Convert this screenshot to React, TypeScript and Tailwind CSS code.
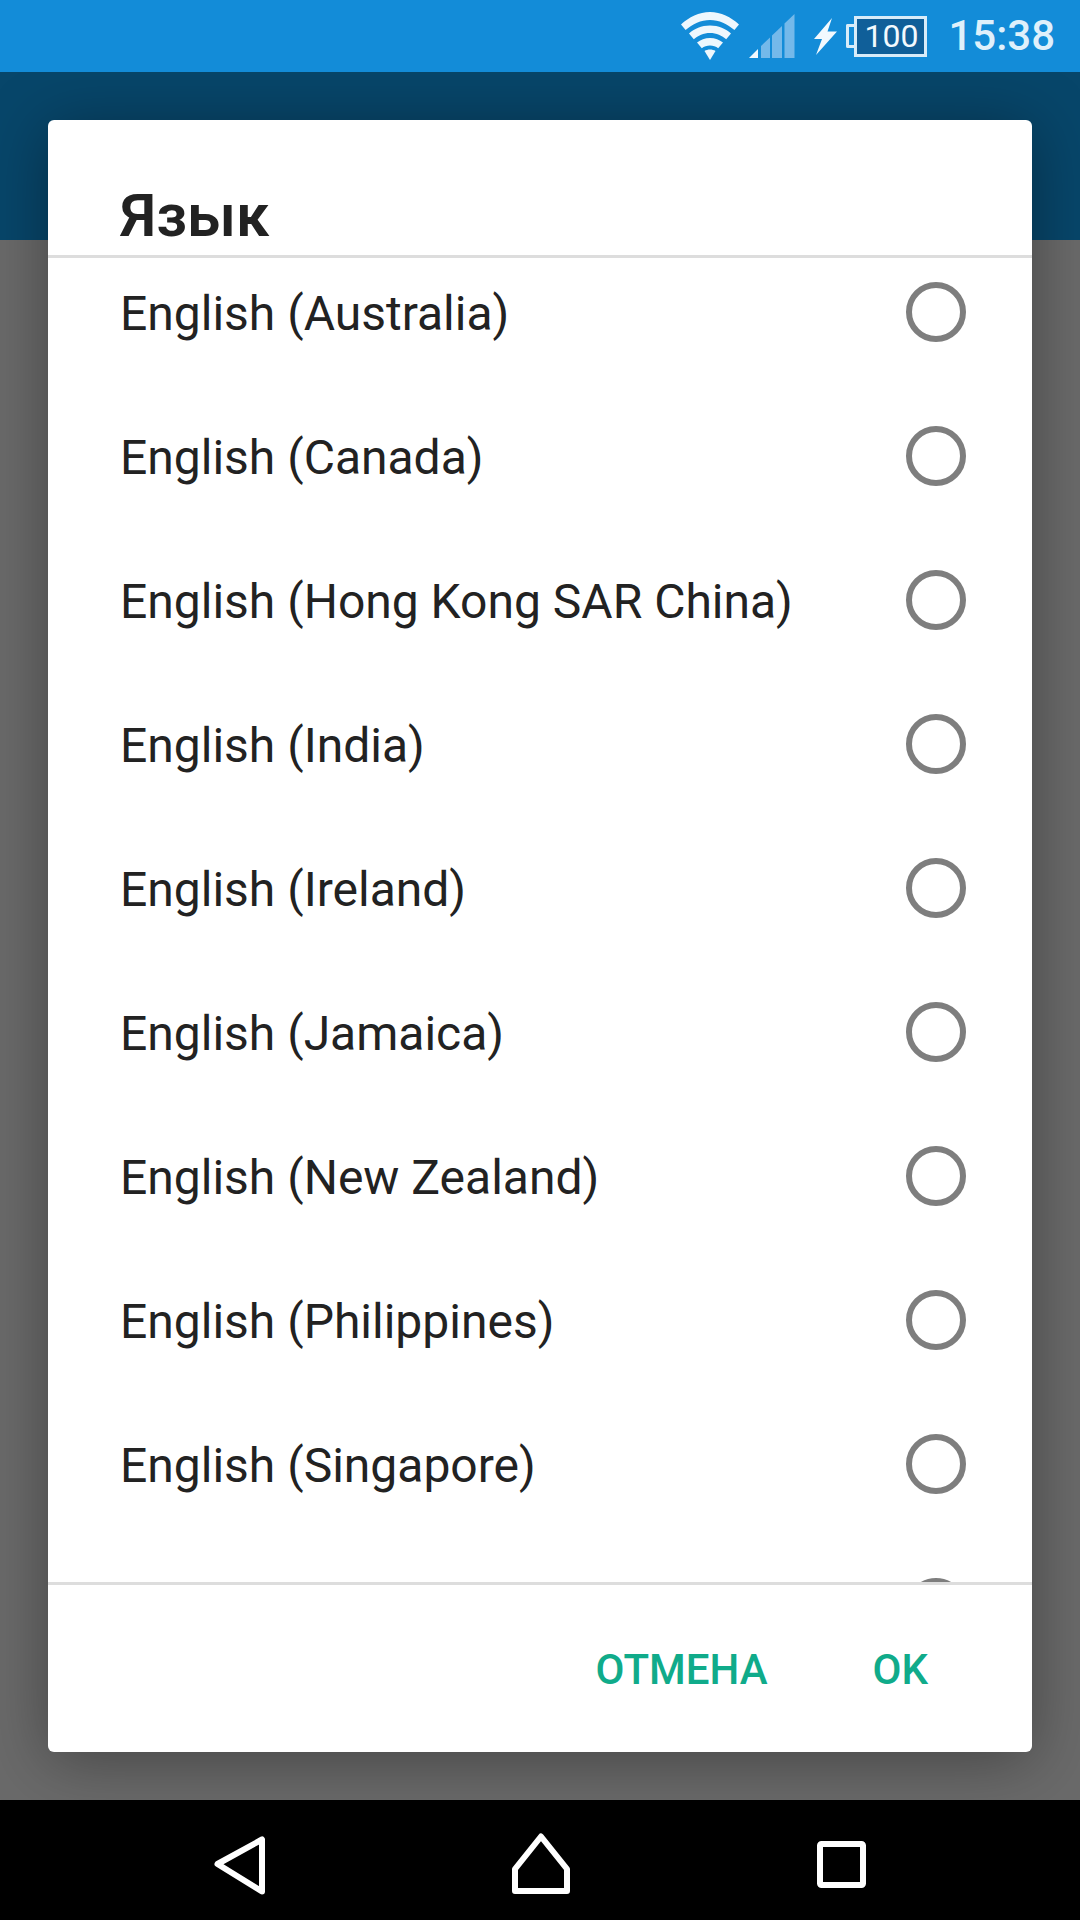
const rows = ["English (Australia)","English (Canada)","English (Hong Kong SAR China)","English (India)","English (Ireland)","English (Jamaica)","English (New Zealand)","English (Philippines)","English (Singapore)",""];

function Wifi() {
  return (
    <svg width="58" height="49" viewBox="0 0 58 49" className="mr-[10px]">
      <path d="M0 12.5C8 5 18 0 29 0s21 5 29 12.5l-4.6 5.6C46.5 12 38 8 29 8S11.500 12 4.600 18.100Z" fill="#eef7fd" />
      <path d="M8 21.500C13 17 20.500 13.500 29 13.500S45 17 50 21.500l-4.800 5.800C41 23.500 35.500 21 29 21s-12 2.500-16.200 6.300Z" fill="#eef7fd" />
      <path d="M16 30.500C19.500 27.800 24 26 29 26s9.500 1.800 13 4.500l-4.800 5.700C35 34.500 32 33.500 29 33.500s-6 1-8.200 2.700Z" fill="#eef7fd" />
      <path d="M23.500 39C25 38 27 37.500 29 37.500s4 .5 5.500 1.500L29 48Z" fill="#eef7fd" />
    </svg>
  );
}

function Signal() {
  return (
    <svg width="46" height="45" viewBox="0 0 46 45" className="mr-[19px]">
      <path d="M0 44 9 35V44Z" fill="#f2f9fe" />
      <path d="M12 32 21 23.500V44H12Z" fill="#74b9ea" />
      <path d="M23 21.500 33 12V44H23Z" fill="#74b9ea" />
      <path d="M35.500 9.500 45.500 0V44H35.500Z" fill="#74b9ea" />
    </svg>
  );
}

function Bolt() {
  return (
    <svg width="23" height="37" viewBox="0 0 23 37" className="mr-[9px]">
      <path d="M18 0 0 21H8L2 37 23 13.500H13.500Z" fill="#f2f9fe" />
    </svg>
  );
}

function Battery() {
  return (
    <div className="flex items-center mr-[21px]">
      <div className="w-[8px] h-[24px] border-[3px] border-r-0 border-[#d8ecf9] rounded-l-[2px]" />
      <div className="w-[73px] h-[41px] border-[3px] border-[#d8ecf9] bg-[#105f99] flex items-center justify-center text-[32px] leading-none text-[#f2f9fe] pl-[1px]">100</div>
    </div>
  );
}

function Row({ label }: { label: string }) {
  return (
    <div className="h-[144px] shrink-0 flex items-center justify-between pl-[72px] pr-[66px]">
      <span className="text-[48px] leading-none text-[#222222] pt-[4px]">{label}</span>
      <div className="w-[60px] h-[60px] rounded-full border-[6px] border-[#7e7e7e]" />
    </div>
  );
}

export default function App() {
  return (
    <div className="relative w-[1080px] h-[1920px] overflow-hidden flex flex-col bg-[#6a6a6a] font-['Roboto',sans-serif]">
      <div className="relative z-20 h-[72px] bg-[#138cd8] flex items-center justify-end pr-[25px]">
        <Wifi />
        <Signal />
        <Bolt />
        <Battery />
        <span className="text-[42px] leading-none font-medium text-[#dff0fb]">15:38</span>
      </div>
      <div className="h-[168px] bg-[#07466a]" />
      <div className="flex-1 bg-[#6a6a6a]" />
      <div className="relative z-20 h-[120px] bg-black">
        <svg width="1080" height="120" viewBox="0 0 1080 120" fill="none" stroke="white" strokeWidth="6" strokeLinejoin="round">
          <path d="M217.500 64 262 39.500V91.500Z" />
          <path d="M541 36.500 567 69V91H515V69Z" />
          <rect x="820" y="44" width="43" height="41" rx="1.500" />
        </svg>
      </div>
      <div className="absolute z-10 left-[48px] top-[120px] w-[984px] h-[1632px] bg-white rounded-[6px] flex flex-col shadow-[0_8px_64px_rgba(0,0,0,0.36)]">
        <div className="h-[138px] shrink-0 border-b-[3px] border-[#dddddd] pl-[72px] flex items-end">
          <span className="text-[60px] leading-none font-semibold text-[#222222] pb-[9px]">Язык</span>
        </div>
        <div className="flex-1 min-h-0 overflow-hidden">
          <div className="-mt-[18px] flex flex-col">
            {rows.map((r, i) => <Row key={i} label={r} />)}
          </div>
        </div>
        <div className="h-[170px] shrink-0 border-t-[3px] border-[#dddddd] flex items-center justify-end pr-[104px] gap-[105px]">
          <span className="text-[42px] leading-none font-medium text-[#10ab8a] pt-[2px]">ОТМЕНА</span>
          <span className="text-[42px] leading-none font-medium text-[#10ab8a] pt-[2px]">OK</span>
        </div>
      </div>
    </div>
  );
}
